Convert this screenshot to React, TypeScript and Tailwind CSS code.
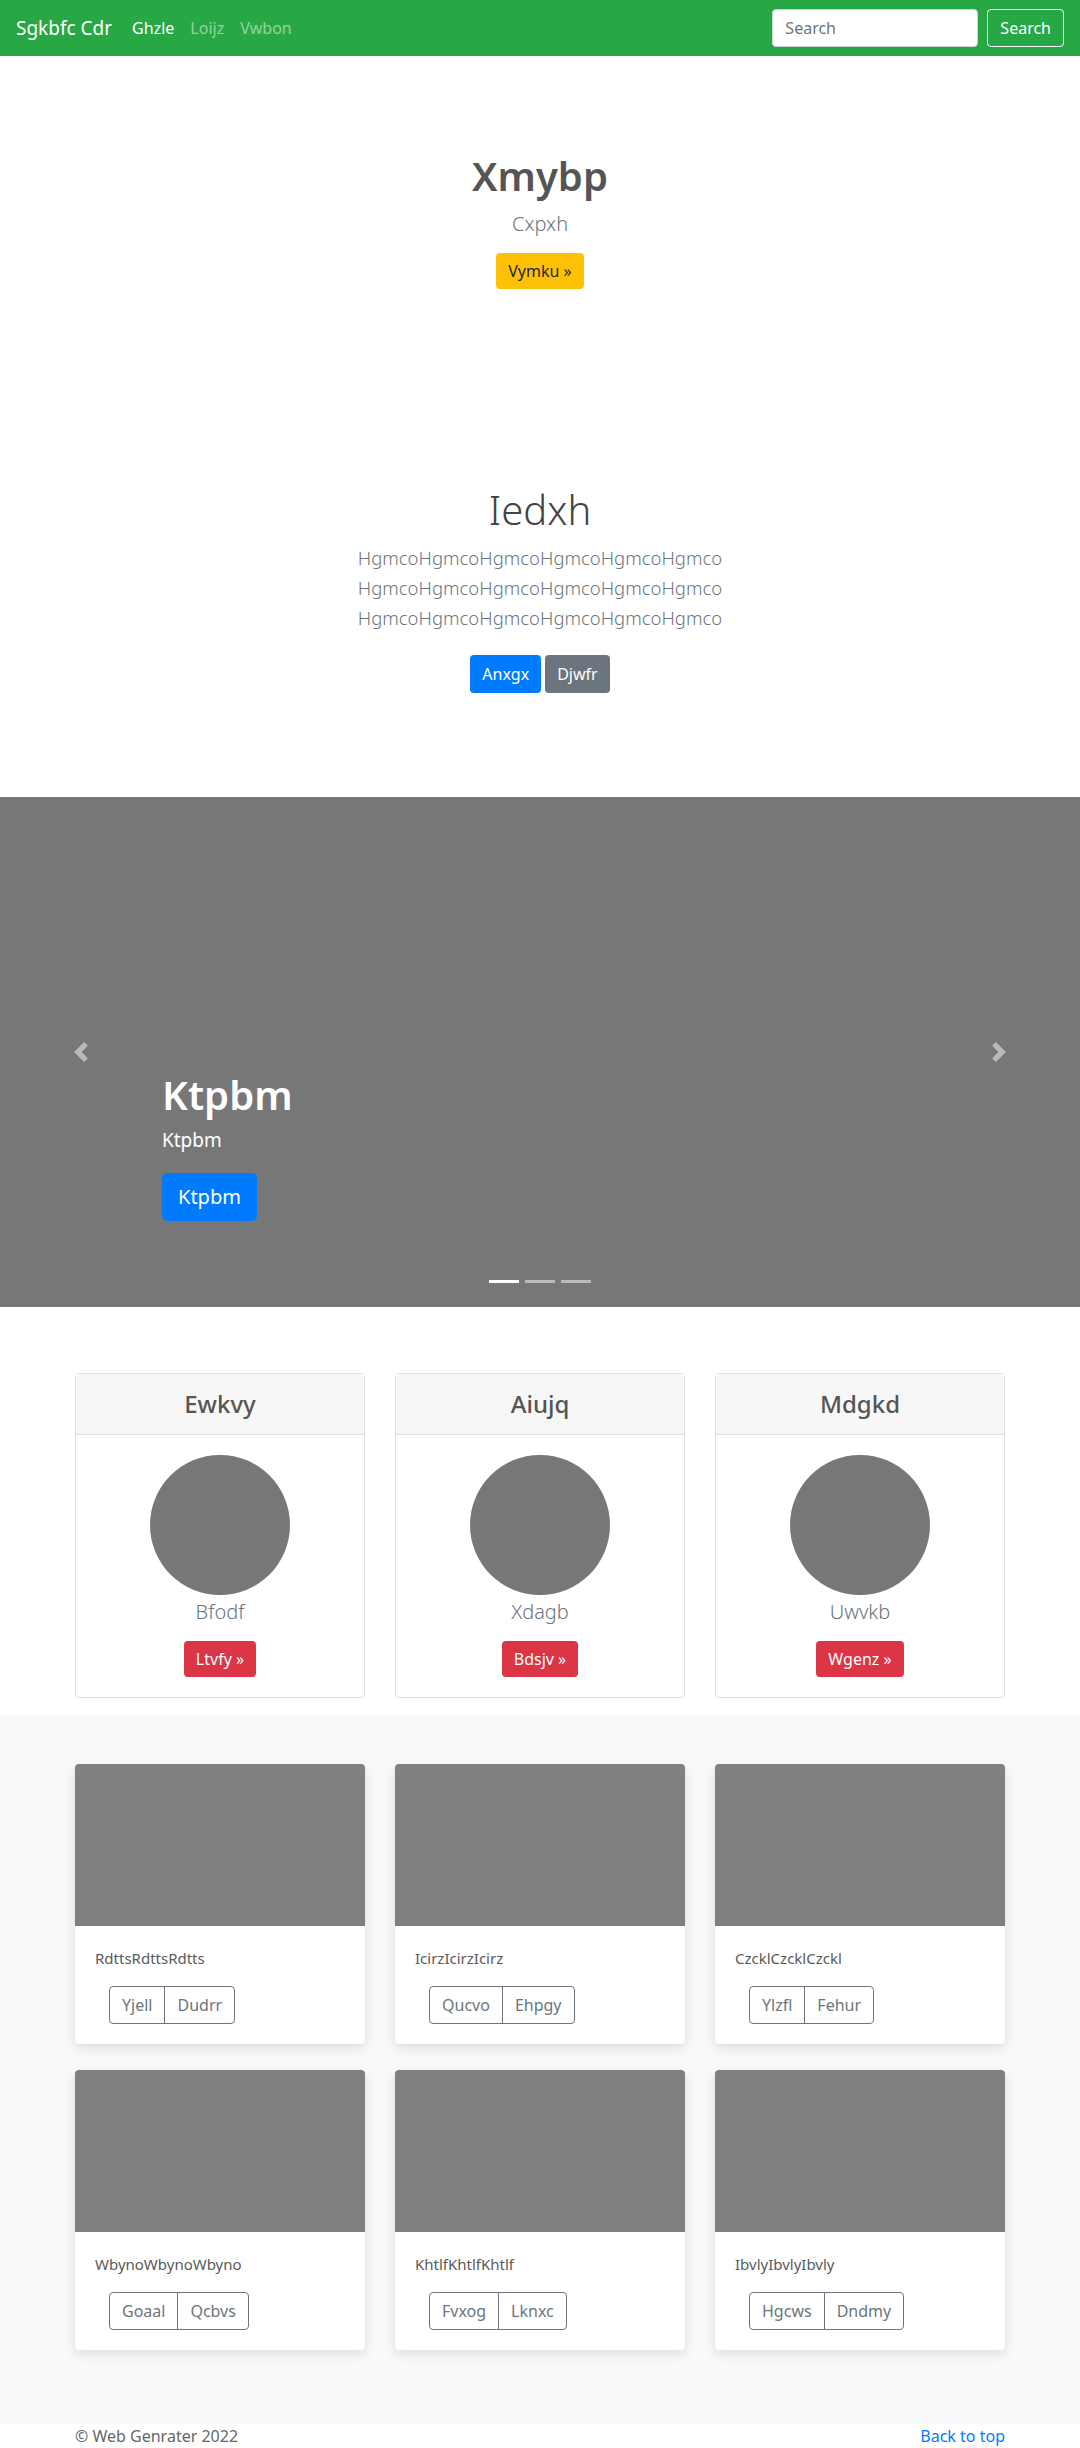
const pricing = [
  { title: "Ewkvy", name: "Bfodf", btn: "Ltvfy" },
  { title: "Aiujq", name: "Xdagb", btn: "Bdsjv" },
  { title: "Mdgkd", name: "Uwvkb", btn: "Wgenz" },
];

const album = [
  { text: "RdttsRdttsRdtts", a: "Yjell", b: "Dudrr" },
  { text: "IcirzIcirzIcirz", a: "Qucvo", b: "Ehpgy" },
  { text: "CzcklCzcklCzckl", a: "Ylzfl", b: "Fehur" },
  { text: "WbynoWbynoWbyno", a: "Goaal", b: "Qcbvs" },
  { text: "KhtlfKhtlfKhtlf", a: "Fvxog", b: "Lknxc" },
  { text: "IbvlyIbvlyIbvly", a: "Hgcws", b: "Dndmy" },
];

function PrevIcon() {
  return (
    <svg width="20" height="20" viewBox="0 0 8 8" fill="#fff">
      <path d="M5.25 0l-4 4 4 4 1.5-1.5L4.25 4l2.5-2.5L5.25 0z" />
    </svg>
  );
}

function NextIcon() {
  return (
    <svg width="20" height="20" viewBox="0 0 8 8" fill="#fff">
      <path d="M2.75 0l-1.5 1.5L3.75 4l-2.5 2.5L2.75 8l4-4-4-4z" />
    </svg>
  );
}

export default function App() {
  return (
    <div className="min-h-screen bg-white font-['Noto_Sans',sans-serif] text-[16px] leading-6 text-[#555]">
      {/* navbar */}
      <nav className="flex h-[56px] items-center justify-between bg-[#28a745] px-4">
        <div className="flex items-center">
          <a className="mr-3 text-[19px] leading-[30px] text-white">Sgkbfc Cdr</a>
          <a className="px-2 text-white">Ghzle</a>
          <a className="px-2 text-white/50">Loijz</a>
          <a className="px-2 text-white/50">Vwbon</a>
        </div>
        <div className="flex items-center">
          <input
            placeholder="Search"
            className="mr-[9px] h-[38px] w-[206px] rounded border border-[#ced4da] bg-white px-3 text-[16px] text-[#495057] placeholder:text-[#6c757d] outline-none"
          />
          <button className="h-[38px] rounded border border-white px-3 text-white">Search</button>
        </div>
      </nav>

      {/* hero */}
      <section className="pt-[96px] text-center">
        <h1 className="text-[40px] font-semibold leading-[1.2]">Xmybp</h1>
        <p className="mt-[9px] text-[20px] font-light leading-[30px] text-[#6c757d]">Cxpxh</p>
        <button className="mt-[14px] rounded bg-[#ffc107] px-3 py-[6px] leading-6 text-[#212529]">
          Vymku »
        </button>
      </section>

      <section className="pt-[197px] text-center">
        <h1 className="text-[40px] font-light leading-[1.2] text-[#444]">Iedxh</h1>
        <p className="mt-[9px] text-[18.5px] font-light leading-[30px] text-[#6c757d]">
          HgmcoHgmcoHgmcoHgmcoHgmcoHgmco
          <br />
          HgmcoHgmcoHgmcoHgmcoHgmcoHgmco
          <br />
          HgmcoHgmcoHgmcoHgmcoHgmcoHgmco
        </p>
        <div className="mt-[22px] flex justify-center gap-1">
          <button className="rounded bg-[#007bff] px-3 py-[7px] leading-6 text-white">Anxgx</button>
          <button className="rounded bg-[#6c757d] px-3 py-[7px] leading-6 text-white">Djwfr</button>
        </div>
      </section>

      {/* carousel */}
      <section className="relative mt-[104px] h-[510px] bg-[#777]">
        <div className="absolute inset-y-0 left-0 flex w-[15%] items-center justify-center opacity-50">
          <PrevIcon />
        </div>
        <div className="absolute inset-y-0 right-0 flex w-[15%] items-center justify-center opacity-50">
          <NextIcon />
        </div>
        <div className="absolute bottom-[86px] left-[15%] right-[15%] text-left text-white">
          <h1 className="text-[40px] font-semibold leading-[1.2]">Ktpbm</h1>
          <p className="mt-[8px] text-[19px] leading-[27px]">Ktpbm</p>
          <button className="mt-[19px] h-[48px] rounded-[5px] bg-[#007bff] px-4 text-[20px] text-white">
            Ktpbm
          </button>
        </div>
        <div className="absolute bottom-[24px] left-0 right-0 flex justify-center gap-[6px]">
          <span className="h-[3px] w-[30px] bg-white" />
          <span className="h-[3px] w-[30px] bg-white/50" />
          <span className="h-[3px] w-[30px] bg-white/50" />
        </div>
      </section>

      {/* pricing */}
      <section className="mx-auto grid w-[930px] grid-cols-3 gap-[30px] pb-[17px] pt-[66px]">
        {pricing.map((p) => (
          <div key={p.title} className="rounded border border-[#dfdfdf] bg-white text-center">
            <div className="border-b border-[#dfdfdf] bg-[#f7f7f7] px-5 py-3">
              <h4 className="text-[24px] font-medium leading-9">{p.title}</h4>
            </div>
            <div className="flex flex-col items-center p-5">
              <div className="h-[140px] w-[140px] rounded-full bg-[#777]" />
              <p className="mt-[2px] text-[20px] font-light leading-[30px] text-[#6c757d]">{p.name}</p>
              <button className="mt-[14px] rounded bg-[#dc3545] px-3 py-[6px] leading-6 text-white">
                {p.btn} »
              </button>
            </div>
          </div>
        ))}
      </section>

      {/* album */}
      <section className="bg-[#f8f9fa] pb-[74px] pt-[49px]">
        <div className="mx-auto grid w-[930px] grid-cols-3 gap-x-[30px] gap-y-[26px]">
          {album.map((c) => (
            <div key={c.text} className="overflow-hidden rounded bg-white shadow-[0_4px_12px_rgba(0,0,0,0.12)]">
              <div className="h-[162px] bg-[#808080]" />
              <div className="p-5">
                <p className="mb-4 text-[15px] leading-6 text-[#5a5a5a]">{c.text}</p>
                <div className="ml-[14px] inline-flex rounded border border-[#6c757d] text-[#6c757d]">
                  <button className="px-3 py-[6px] leading-6">{c.a}</button>
                  <button className="border-l border-[#6c757d] px-3 py-[6px] leading-6">{c.b}</button>
                </div>
              </div>
            </div>
          ))}
        </div>
      </section>

      {/* footer */}
      <footer className="mx-auto flex w-[930px] justify-between text-[#666]">
        <p>© Web Genrater 2022</p>
        <a className="text-[#007bff]">Back to top</a>
      </footer>
    </div>
  );
}
